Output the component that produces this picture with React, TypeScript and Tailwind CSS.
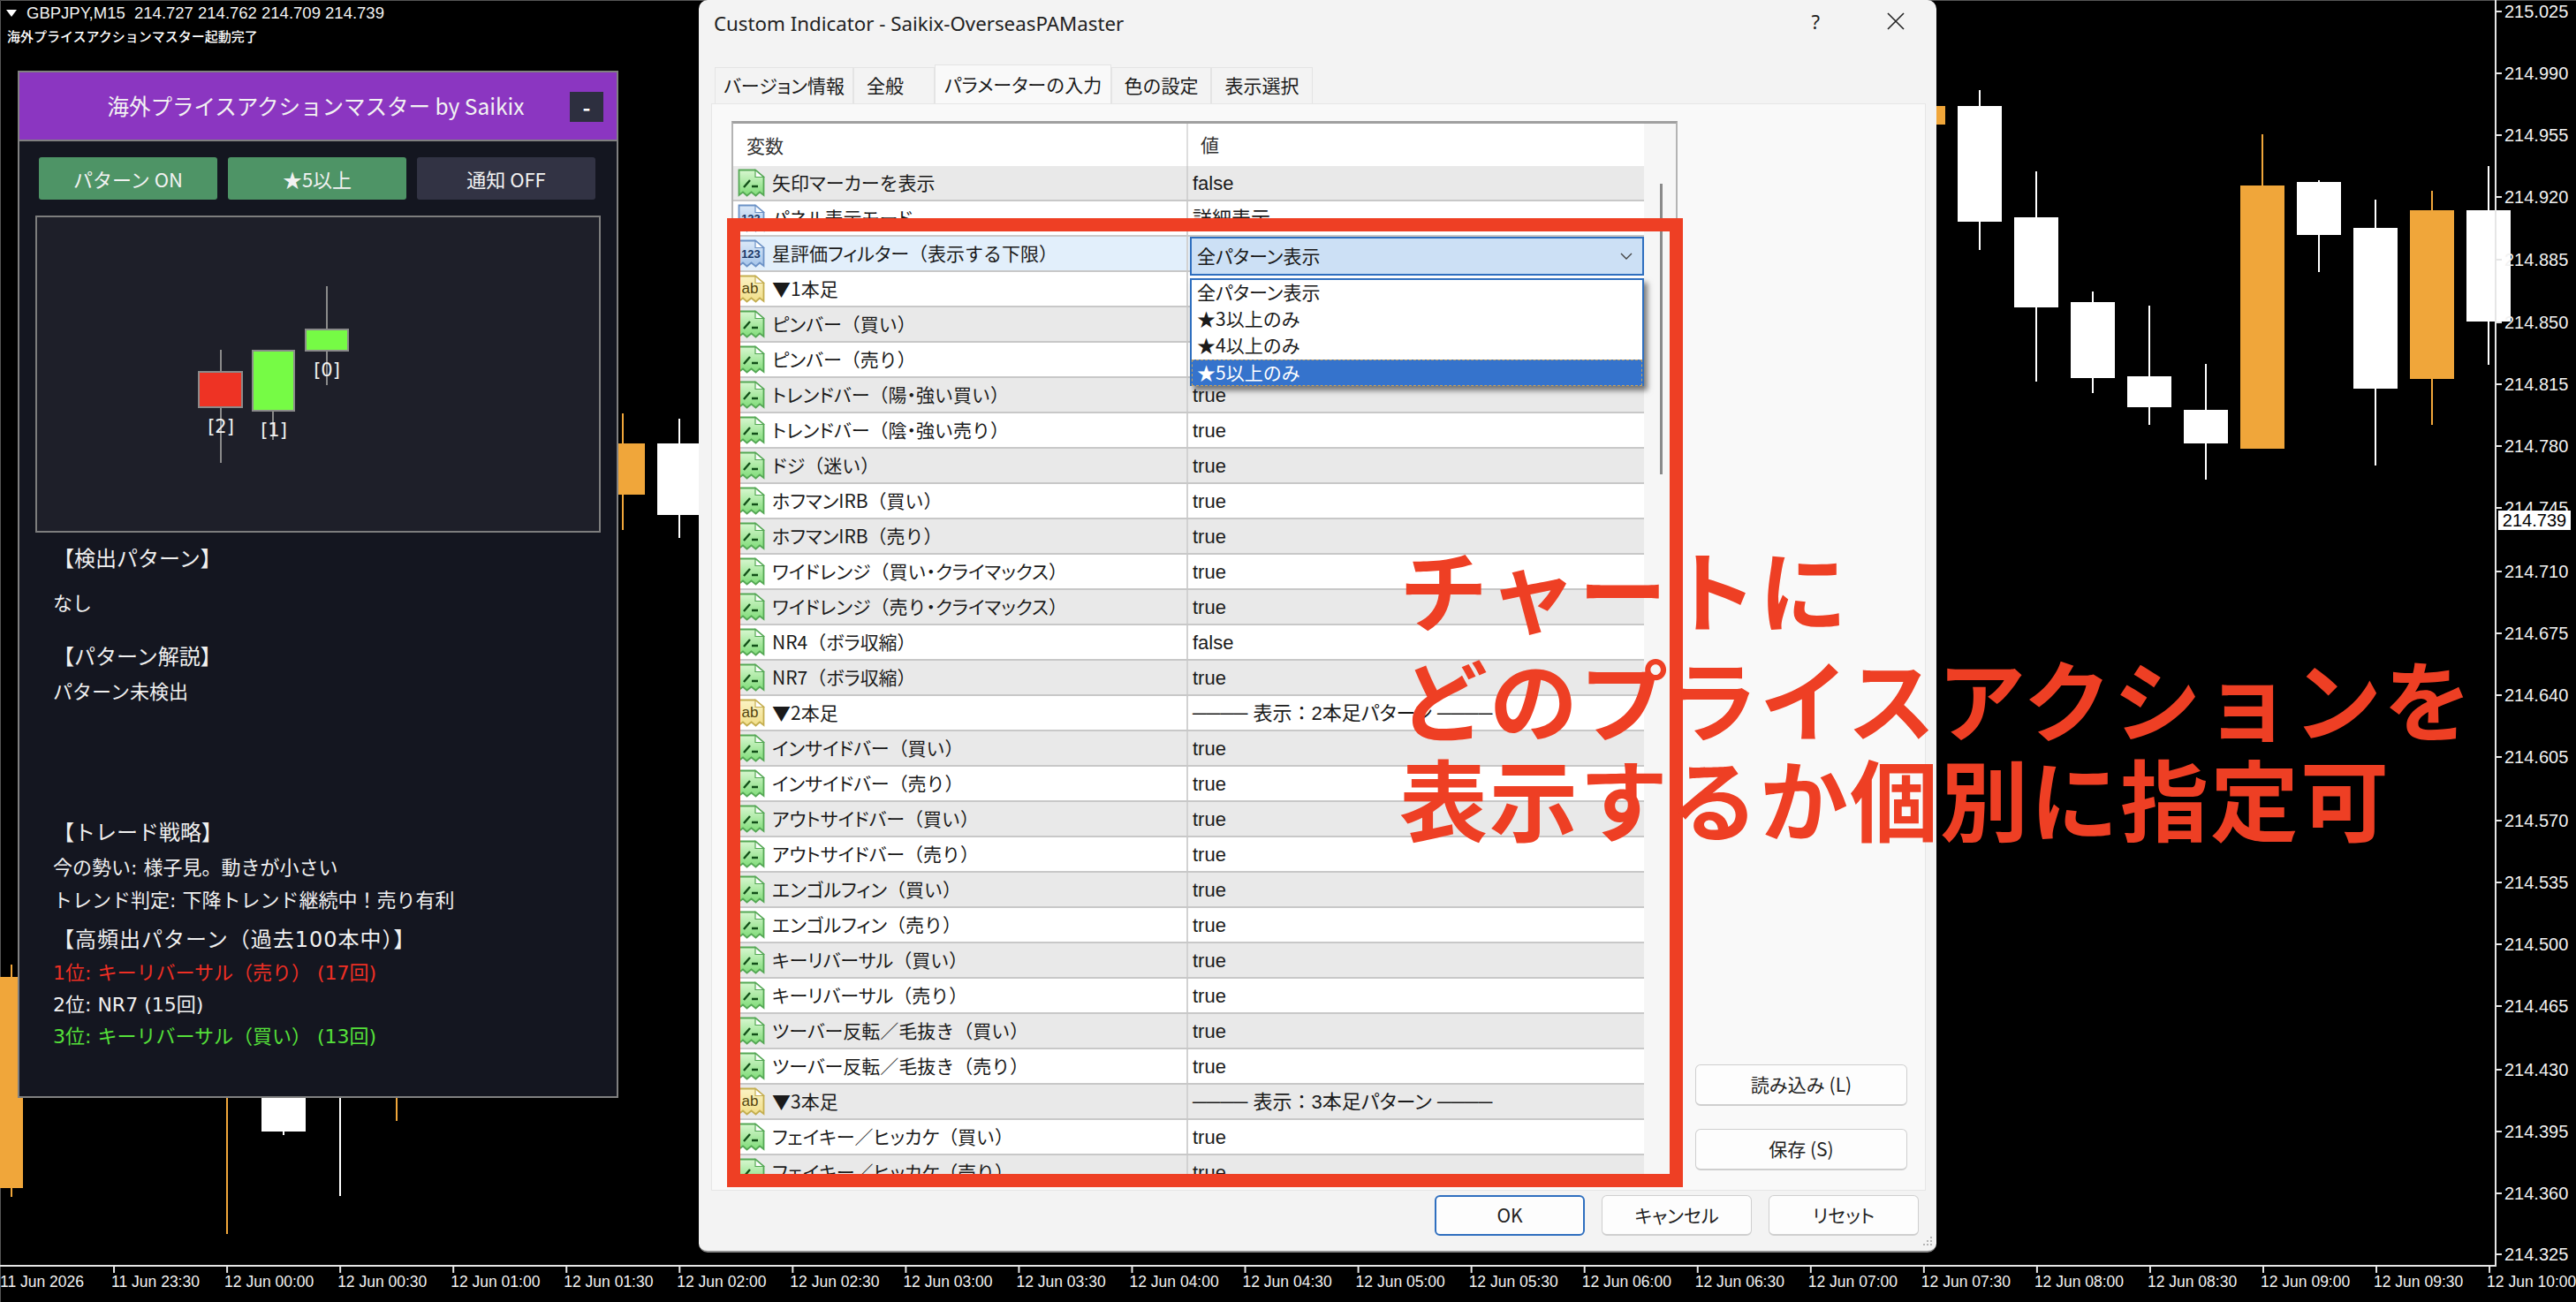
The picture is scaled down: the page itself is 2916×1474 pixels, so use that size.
const jp = "[font-family:'Noto_Sans_CJK_JP',sans-serif]";

// x, width, body top, body bottom, wick top, wick bottom, colour
const candles: [number, number, number, number, number, number, string][] = [
  [0, 26, 1106, 1345, 1092, 1355, "#f0a63a"],
  [232, 50, 1240, 1240, 1240, 1397, "#f0a63a"],
  [296, 50, 1240, 1281, 1240, 1285, "#ffffff"],
  [360, 50, 1240, 1240, 1240, 1354, "#ffffff"],
  [424, 50, 1240, 1240, 1240, 1269, "#f0a63a"],
  [680, 50, 502, 560, 468, 600, "#f0a63a"],
  [744, 50, 502, 583, 474, 609, "#ffffff"],
  [2152, 50, 120, 141, 100, 160, "#f0a63a"],
  [2216, 50, 120, 251, 102, 283, "#ffffff"],
  [2280, 50, 246, 348, 194, 432, "#ffffff"],
  [2344, 50, 342, 428, 330, 445, "#ffffff"],
  [2408, 50, 426, 461, 346, 481, "#ffffff"],
  [2472, 50, 464, 502, 412, 543, "#ffffff"],
  [2536, 50, 210, 508, 152, 508, "#f0a63a"],
  [2600, 50, 206, 266, 204, 308, "#ffffff"],
  [2664, 50, 258, 440, 226, 527, "#ffffff"],
  [2728, 50, 238, 429, 216, 481, "#f0a63a"],
  [2792, 50, 238, 364, 188, 413, "#ffffff"],
];

const prices: [string, number][] = [
  ["215.025", 13], ["214.990", 83], ["214.955", 153], ["214.920", 223], ["214.885", 294],
  ["214.850", 365], ["214.815", 435], ["214.780", 505], ["214.745", 575], ["214.710", 647],
  ["214.675", 717], ["214.640", 787], ["214.605", 857], ["214.570", 929], ["214.535", 999],
  ["214.500", 1069], ["214.465", 1139], ["214.430", 1211], ["214.395", 1281], ["214.360", 1351],
  ["214.325", 1420],
];

const times = ["11 Jun 2026", "11 Jun 23:30"];
for (let i = 0; i <= 20; i++) {
  const h = String(Math.floor(i / 2)).padStart(2, "0");
  times.push(`12 Jun ${h}:${i % 2 ? "30" : "00"}`);
}

type Kind = "g" | "b" | "y";
const rows: { k: Kind; l: string; v: string }[] = [
  { k: "g", l: "矢印マーカーを表示", v: "false" },
  { k: "b", l: "パネル表示モード", v: "詳細表示" },
  { k: "b", l: "星評価フィルター（表示する下限）", v: "" },
  { k: "y", l: "▼1本足", v: "" },
  { k: "g", l: "ピンバー（買い）", v: "" },
  { k: "g", l: "ピンバー（売り）", v: "" },
  { k: "g", l: "トレンドバー（陽・強い買い）", v: "true" },
  { k: "g", l: "トレンドバー（陰・強い売り）", v: "true" },
  { k: "g", l: "ドジ（迷い）", v: "true" },
  { k: "g", l: "ホフマンIRB（買い）", v: "true" },
  { k: "g", l: "ホフマンIRB（売り）", v: "true" },
  { k: "g", l: "ワイドレンジ（買い・クライマックス）", v: "true" },
  { k: "g", l: "ワイドレンジ（売り・クライマックス）", v: "true" },
  { k: "g", l: "NR4（ボラ収縮）", v: "false" },
  { k: "g", l: "NR7（ボラ収縮）", v: "true" },
  { k: "y", l: "▼2本足", v: "──── 表示：2本足パターン ────" },
  { k: "g", l: "インサイドバー（買い）", v: "true" },
  { k: "g", l: "インサイドバー（売り）", v: "true" },
  { k: "g", l: "アウトサイドバー（買い）", v: "true" },
  { k: "g", l: "アウトサイドバー（売り）", v: "true" },
  { k: "g", l: "エンゴルフィン（買い）", v: "true" },
  { k: "g", l: "エンゴルフィン（売り）", v: "true" },
  { k: "g", l: "キーリバーサル（買い）", v: "true" },
  { k: "g", l: "キーリバーサル（売り）", v: "true" },
  { k: "g", l: "ツーバー反転／毛抜き（買い）", v: "true" },
  { k: "g", l: "ツーバー反転／毛抜き（売り）", v: "true" },
  { k: "y", l: "▼3本足", v: "──── 表示：3本足パターン ────" },
  { k: "g", l: "フェイキー／ヒッカケ（買い）", v: "true" },
  { k: "g", l: "フェイキー／ヒッカケ（売り）", v: "true" },
];

// katakana in the dialog font is proportional, kanji and brackets are not
const Kana = ({ text }: { text: string }) => (
  <>
    {text.split(/([ァ-ヶー・]+)/).map((part, i) =>
      i % 2 ? (
        <span key={i} className="[font-feature-settings:'palt']">
          {part}
        </span>
      ) : (
        part
      )
    )}
  </>
);

const iconColors: Record<Kind, { from: string; to: string; edge: string; ink: string }> = {
  g: { from: "#d8f7d0", to: "#7fdc78", edge: "#55a855", ink: "#124f18" },
  b: { from: "#dce9f8", to: "#a4c4ea", edge: "#6c92c6", ink: "#1b3a68" },
  y: { from: "#fbf3c4", to: "#f1de88", edge: "#c4ae50", ink: "#54450e" },
};

// torn-page type icon from the MT4 input list
const TypeIcon = ({ k }: { k: Kind }) => {
  const c = iconColors[k];
  return (
    <svg width="31" height="32" viewBox="0 0 31 32" className="shrink-0">
      <defs>
        <linearGradient id={`page-${k}`} x1="0" y1="0" x2="0" y2="1">
          <stop offset="0" stopColor={c.from} />
          <stop offset="1" stopColor={c.to} />
        </linearGradient>
      </defs>
      <path
        d="M1.5 1.5 H20 L29.5 9.5 V30 L25 26.5 L20.5 30.5 L15.5 26.5 L10.5 30.5 L6 26.5 L1.5 30 Z"
        fill={`url(#page-${k})`}
        stroke={c.edge}
        strokeWidth="1.8"
      />
      <path d="M20 1.5 V9.5 H29.5 Z" fill="#ffffff" stroke={c.edge} strokeWidth="1.2" />
      {k === "g" && (
        <path d="M7 21 L14 13 M16 20 H23" fill="none" stroke={c.ink} strokeWidth="2.4" />
      )}
      {k === "b" && (
        <text x="15" y="21" textAnchor="middle" fontSize="13" fontWeight="700" fill={c.ink} fontFamily="Liberation Sans">
          123
        </text>
      )}
      {k === "y" && (
        <text x="14" y="21" textAnchor="middle" fontSize="17" fill={c.ink} fontFamily="Liberation Sans">
          ab
        </text>
      )}
    </svg>
  );
};

const ChartLayer = () => (
  <svg width="2916" height="1474" viewBox="0 0 2916 1474" className="absolute left-0 top-0">
    <path d="M0.5 1474 V0.5 H2916" fill="none" stroke="#555555" />
    {candles.map(([x, w, top, bottom, wTop, wBottom, color]) => (
      <g key={`${x}-${top}`}>
        <rect x={x + w / 2 - 1} y={wTop} width="2" height={wBottom - wTop} fill={color} />
        <rect x={x} y={top} width={w} height={bottom - top} fill={color} />
      </g>
    ))}
    <rect x="0" y="1432" width="2826" height="2" fill="#e6e6e6" />
    <rect x="2824" y="0" width="2" height="1434" fill="#e6e6e6" />
    {prices.map(([label, y]) => (
      <g key={label}>
        <rect x="2826" y={y - 1} width="6" height="2" fill="#e6e6e6" />
        <text x="2835" y={y + 7} fontSize="20" fill="#f2f2f2" fontFamily="Liberation Sans">
          {label}
        </text>
      </g>
    ))}
    {times.map((t, i) => (
      <g key={t}>
        {i > 0 && i < 23 && <rect x={i * 128.05} y="1433" width="2" height="8" fill="#e6e6e6" />}
        <text x={i * 128.05 + 1 - (i === 0 ? 1 : 3)} y="1457" fontSize="17.5" fill="#f2f2f2" fontFamily="Liberation Sans">
          {t}
        </text>
      </g>
    ))}
  </svg>
);

const panelLines: { t: string; cls: string }[] = [
  { t: "【検出パターン】", cls: "mt-[12px] text-[24px] text-[#f0f0f0]" },
  { t: "なし", cls: "mt-[15px] text-[22px] text-[#f0f0f0]" },
  { t: "【パターン解説】", cls: "mt-[24px] text-[24px] text-[#f0f0f0]" },
  { t: "パターン未検出", cls: "mt-[4px] text-[22px] text-[#f0f0f0]" },
  { t: "【トレード戦略】", cls: "mt-[123px] text-[24px] text-[#f0f0f0]" },
  { t: "今の勢い: 様子見。動きが小さい", cls: "mt-[4px] text-[22px] text-[#f0f0f0]" },
  { t: "トレンド判定: 下降トレンド継続中！売り有利", cls: "mt-[1px] text-[22px] text-[#f0f0f0]" },
  { t: "【高頻出パターン（過去100本中）】", cls: "mt-[8px] text-[24px] tracking-[1px] text-[#f0f0f0]" },
  { t: "1位: キーリバーサル（売り） (17回)", cls: "mt-[2px] text-[22px] text-[#ee2f24]" },
  { t: "2位: NR7 (15回)", cls: "text-[22px] text-[#f0f0f0]" },
  { t: "3位: キーリバーサル（買い） (13回)", cls: "text-[22px] text-[#55e03a]" },
];

const Panel = () => (
  <div className={`absolute left-[20px] top-[80px] w-[680px] h-[1163px] border-2 border-[#808080] bg-[#141620] ${jp}`}>
    <div className="relative flex h-[78px] items-center justify-center bg-[#8b36c1] border-b-2 border-[#808080] pr-[4px]">
      <span className="text-[24.5px] text-[#f2f2f2] ml-[-1px]">海外プライスアクションマスター by Saikix</span>
      <div className="absolute right-[15px] top-[22px] flex h-[34px] w-[38px] items-center justify-center bg-[#2d2f3f] text-[24px] font-bold text-white">
        -
      </div>
    </div>
    <div className="flex gap-[12px] pl-[22px] pt-[18px]">
      <div className="flex h-[48px] w-[202px] items-center justify-center rounded-[3px] bg-[#4e9466] text-[22px] text-[#f2f2f2]">
        パターン ON
      </div>
      <div className="flex h-[48px] w-[202px] items-center justify-center rounded-[3px] bg-[#4e9466] text-[22px] text-[#f2f2f2]">
        ★5以上
      </div>
      <div className="flex h-[48px] w-[202px] items-center justify-center rounded-[3px] bg-[#323344] text-[22px] text-[#f2f2f2]">
        通知 OFF
      </div>
    </div>
    <div className="ml-[18px] mt-[18px] h-[359px] w-[640px] border-2 border-[#7d7d7d] bg-[#1e1f29]">
      <svg width="636" height="355" viewBox="0 0 636 355">
        <rect x="207" y="150" width="2" height="128" fill="#8a8a8a" />
        <rect x="266" y="219" width="2" height="33" fill="#8a8a8a" />
        <rect x="327" y="78" width="2" height="112" fill="#8a8a8a" />
        <rect x="183" y="175" width="49" height="40" fill="#ee3324" stroke="#8a8a8a" strokeWidth="2" />
        <rect x="244" y="151" width="47" height="68" fill="#76fb45" stroke="#8a8a8a" strokeWidth="2" />
        <rect x="304" y="127" width="48" height="24" fill="#76fb45" stroke="#8a8a8a" strokeWidth="2" />
        <text x="208" y="244" textAnchor="middle" fontSize="21" fill="#f2f2f2" fontFamily="DejaVu Sans">[2]</text>
        <text x="268" y="248" textAnchor="middle" fontSize="21" fill="#f2f2f2" fontFamily="DejaVu Sans">[1]</text>
        <text x="328" y="180" textAnchor="middle" fontSize="21" fill="#f2f2f2" fontFamily="DejaVu Sans">[0]</text>
      </svg>
    </div>
    {panelLines.map((line) => (
      <div
        key={line.t}
        className={`h-[36px] pl-[38px] leading-[36px] whitespace-nowrap [font-family:'DejaVu_Sans','Noto_Sans_CJK_JP',sans-serif] ${line.cls}`}
      >
        {line.t}
      </div>
    ))}
  </div>
);

const Tab = ({ label, cls }: { label: string; cls: string }) => (
  <div className={`flex items-center justify-center whitespace-nowrap border border-b-0 border-[#e4e4e4] text-[21px] text-[#1a1a1a] ${cls}`}>
    <Kana text={label} />
  </div>
);

const ParamTable = () => (
  <div className="h-[1195px] w-[1071px] shrink-0 overflow-hidden border-x-2 border-t-[3px] border-x-[#b4b4b4] border-t-[#a0a0a0] bg-[#f6f6f6] flex">
    <div className="w-[1031px] shrink-0 bg-white">
      <div className="flex h-[48px] items-center text-[21px] text-[#333333]">
        <span className="w-[515px] border-r-2 border-[#dedede] pl-[15px] leading-[48px]">変数</span>
        <span className="pl-[14px]">値</span>
      </div>
      <div className="relative">
        {rows.map((r, i) => (
          <div
            key={r.l}
            className={`flex h-[40px] items-center border-b-2 border-[#c8c8c8] text-[21px] text-[#1a1a1a] ${
              i === 2 ? "bg-[#e2effb]" : i % 2 === 0 ? "bg-[#e9e9e9]" : "bg-white"
            }`}
          >
            <div className="flex h-full w-[515px] shrink-0 items-center gap-[8px] border-r-2 border-[#d2d2d2] pl-[5px] whitespace-nowrap">
              <TypeIcon k={r.k} />
              <span>
                <Kana text={r.l} />
              </span>
            </div>
            <span className="whitespace-nowrap pl-[5px] text-[22px] [font-family:'Liberation_Sans','Noto_Sans_CJK_JP',sans-serif]">
              <Kana text={r.v} />
            </span>
          </div>
        ))}
        {/* open combo box */}
        <div className="absolute left-[517px] top-[80px] flex h-[44px] w-[514px] items-center justify-between border-2 border-[#2f6fbf] bg-[#cce0f5] pl-[6px] pr-[10px] text-[21px] text-[#1a1a1a]">
          <span>
            <Kana text="全パターン表示" />
          </span>
          <svg width="16" height="10" viewBox="0 0 16 10">
            <path d="M2 2 L8 8 L14 2" fill="none" stroke="#444444" strokeWidth="1.4" />
          </svg>
        </div>
        <div className="absolute left-[517px] top-[127px] h-[122px] w-[514px] border-2 border-[#2f6fbf] bg-white text-[21px] leading-[27px] text-[#1a1a1a] shadow-[4px_5px_6px_rgba(0,0,0,0.5)]">
          <div className="h-[30px] pl-[6px]">
            <Kana text="全パターン表示" />
          </div>
          <div className="h-[30px] pl-[6px]">★3以上のみ</div>
          <div className="h-[30px] pl-[6px]">★4以上のみ</div>
          <div className="h-[30px] border border-dashed border-[#c9a25a] bg-[#3573cc] pl-[5px] text-white">★5以上のみ</div>
        </div>
      </div>
    </div>
    <div className="pl-[18px]">
      <div className="mt-[68px] h-[329px] w-[3px] bg-[#8a8a8a]" />
    </div>
  </div>
);

const Dialog = () => (
  <div className={`absolute left-[791px] top-0 flex h-[1418px] w-[1401px] flex-col rounded-[10px] border-b-2 border-[#8c8c8c] bg-[#f3f3f3] ${jp}`}>
    <div className="flex h-[73px] shrink-0 items-start">
      <span className="ml-[17px] mt-[10px] text-[22.3px] text-[#222222] [font-family:'Noto_Sans',sans-serif]">
        Custom Indicator - Saikix-OverseasPAMaster
      </span>
      <span className="ml-auto mr-[75px] mt-[8px] text-[22px] text-[#222222] [font-family:'Noto_Sans',sans-serif]">?</span>
      <svg width="22" height="22" viewBox="0 0 22 22" className="mr-[35px] mt-[13px]">
        <path d="M2 2 L20 20 M20 2 L2 20" stroke="#222222" strokeWidth="1.6" />
      </svg>
    </div>
    <div className="flex h-[44px] shrink-0 items-end pl-[18px]">
      <Tab label="バージョン情報" cls="h-[41px] w-[157px]" />
      <Tab label="全般" cls="h-[41px] w-[92px] pr-[20px]" />
      <Tab label="パラメーターの入力" cls="h-[44px] w-[200px] bg-[#f9f9f9]" />
      <Tab label="色の設定" cls="h-[41px] w-[113px]" />
      <Tab label="表示選択" cls="h-[41px] w-[115px]" />
    </div>
    <div className="ml-[14px] flex h-[1231px] w-[1375px] shrink-0 border border-[#e6e6e6] bg-[#f9f9f9] pl-[22px] pt-[19px]">
      <ParamTable />
      <div className="ml-[20px] flex h-[1188px] w-[240px] flex-col justify-end gap-[26px] text-[21px] text-[#222222]">
        <div className="flex h-[47px] items-center justify-center gap-[6px] rounded-[6px] border border-b-2 border-[#cfcfcf] bg-[#fdfdfd]">
          読み込み (L)
        </div>
        <div className="flex h-[47px] items-center justify-center rounded-[6px] border border-b-2 border-[#cfcfcf] bg-[#fdfdfd]">
          保存 (S)
        </div>
      </div>
    </div>
    <div className="flex justify-end gap-[19px] pr-[20px] pt-[5px] text-[21px] text-[#222222]">
      <div className="flex h-[46px] w-[170px] items-center justify-center rounded-[6px] border-2 border-[#2f6fbf] bg-[#fdfdfd]">
        OK
      </div>
      <div className="flex h-[46px] w-[170px] items-center justify-center rounded-[6px] border border-b-2 border-[#cfcfcf] bg-[#fdfdfd]">
        <Kana text="キャンセル" />
      </div>
      <div className="flex h-[46px] w-[170px] items-center justify-center rounded-[6px] border border-b-2 border-[#cfcfcf] bg-[#fdfdfd]">
        <Kana text="リセット" />
      </div>
    </div>
    {/* resize grip */}
    <svg width="14" height="14" viewBox="0 0 14 14" className="absolute bottom-[4px] right-[4px]">
      <path d="M11 2 h2 v2 h-2 z M11 6 h2 v2 h-2 z M7 6 h2 v2 h-2 z M11 10 h2 v2 h-2 z M7 10 h2 v2 h-2 z M3 10 h2 v2 h-2 z" fill="#b5b5b5" />
    </svg>
  </div>
);

export default function App() {
  return (
    <div className="relative h-[1474px] w-[2916px] overflow-hidden bg-black">
      <ChartLayer />

      {/* chart legend */}
      <div className="absolute left-[7px] top-[4px] flex items-center gap-[11px] text-[18.5px] leading-[22px] text-[#f2f2f2] whitespace-pre [font-family:'Liberation_Sans',sans-serif]">
        <svg width="12" height="8" viewBox="0 0 12 8">
          <path d="M0 0 H12 L6 8 Z" fill="#ffffff" />
        </svg>
        GBPJPY,M15  214.727 214.762 214.709 214.739
      </div>
      <div className={`absolute left-[8px] top-[30px] text-[15px] font-medium leading-[22px] text-white ${jp}`}>
        海外プライスアクションマスター起動完了
      </div>

      <div className="absolute left-[2828px] top-[578px] flex h-[22px] w-[82px] items-center justify-center bg-white text-[20px] text-black [font-family:'Liberation_Sans',sans-serif]">
        214.739
      </div>

      <Panel />
      <Dialog />

      {/* callout frame and caption */}
      <div className="absolute left-[823px] top-[247px] h-[1097px] w-[1082px] border-[15px] border-[#ee3f24]" />
      <div className={`absolute left-[1584px] top-[606px] whitespace-nowrap text-[100px] font-bold leading-[118px] tracking-[2px] text-[#ee3f24] ${jp}`}>
        <div>チャートに</div>
        <div className="mt-[6px]">どのプライスアクションを</div>
        <div className="mt-[-5px]">表示するか個別に指定可</div>
      </div>
    </div>
  );
}
